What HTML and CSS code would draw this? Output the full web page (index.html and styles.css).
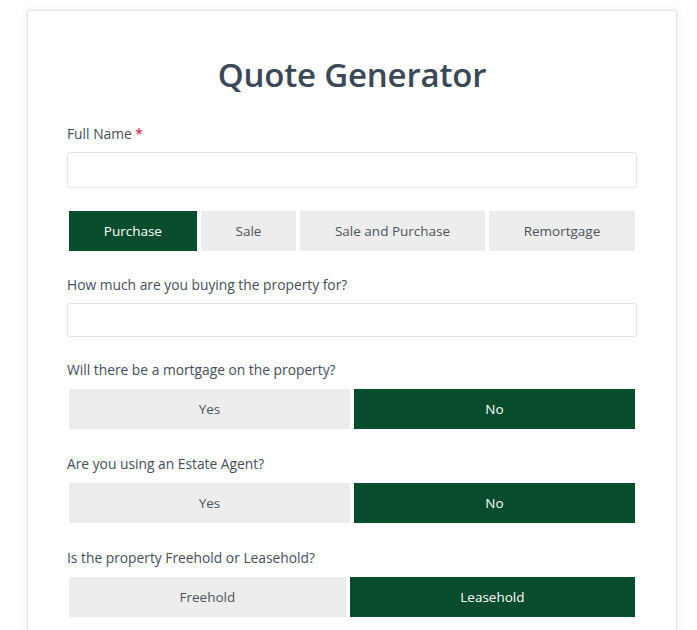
FILE: index.html
```html
<!DOCTYPE html>
<html lang="en">
<head>
<meta charset="utf-8">
<title>Quote Generator</title>
<link rel="stylesheet" href="styles.css">
</head>
<body>
<div class="card">
  <h1 class="title">Quote Generator</h1>

  <div class="field field-first">
    <label class="label">Full Name <span class="req">*</span></label>
    <input class="input" type="text">
  </div>

  <div class="group tabs">
    <button class="opt active">Purchase</button>
    <button class="opt">Sale</button>
    <button class="opt">Sale and Purchase</button>
    <button class="opt">Remortgage</button>
  </div>

  <div class="field field-price">
    <label class="label">How much are you buying the property for?</label>
    <input class="input input-sm" type="text">
  </div>

  <div class="field choice">
    <label class="label">Will there be a mortgage on the property?</label>
    <div class="group equal">
      <button class="opt">Yes</button>
      <button class="opt active">No</button>
    </div>
  </div>

  <div class="field choice">
    <label class="label">Are you using an Estate Agent?</label>
    <div class="group equal">
      <button class="opt">Yes</button>
      <button class="opt active">No</button>
    </div>
  </div>

  <div class="field choice">
    <label class="label">Is the property Freehold or Leasehold?</label>
    <div class="group">
      <button class="opt">Freehold</button>
      <button class="opt active">Leasehold</button>
    </div>
  </div>
</div>
</body>
</html>
```

FILE: styles.css
```css
* { box-sizing: border-box; }

html, body {
  margin: 0;
  padding: 0;
  background: #ffffff;
}

body {
  font-family: "Open Sans", "Noto Sans", sans-serif;
  color: #444d57;
  padding: 10px 0 0 27px;
}

.card {
  width: 650px;
  min-height: 640px;
  background: #fff;
  border: 1px solid #e2e2e2;
  border-radius: 3px;
  box-shadow: 0 0 10px rgba(0, 0, 0, 0.08);
  padding: 44px 39px 0 39px;
}

.title {
  margin: 0 0 30px 0;
  text-align: center;
  font-size: 33px;
  font-weight: 600;
  line-height: 40px;
  color: #3a4858;
  letter-spacing: -0.2px;
}

.field {
  margin-bottom: 25px;
}

.field-first { margin-bottom: 23px; }

.field-price { margin-bottom: 24px; }

.label {
  display: block;
  font-size: 13.8px;
  line-height: 18px;
  color: #454f5b;
  margin-bottom: 9px;
}

.choice .label { margin-bottom: 10px; }

.choice { margin-bottom: 26px; }

.req { color: #e0003a; }

.input {
  display: block;
  width: 100%;
  height: 36px;
  border: 1px solid #dfe3e8;
  border-radius: 3px;
  background: #fff;
  font: inherit;
  outline: none;
}

.input-sm { height: 34px; }

.group {
  display: flex;
  margin: 0;
}

.tabs { margin-bottom: 25px; }

.opt {
  flex: 1 1 auto;
  height: 40px;
  margin: 0 2px;
  padding: 0 30px;
  border: 0;
  border-radius: 0;
  background: #ededed;
  color: #4b5560;
  font-family: "Open Sans", "Noto Sans", sans-serif;
  font-size: 13.5px;
}

.equal .opt { flex: 1 1 0; }

.opt.active {
  background: #064c2d;
  color: #ffffff;
}
```
